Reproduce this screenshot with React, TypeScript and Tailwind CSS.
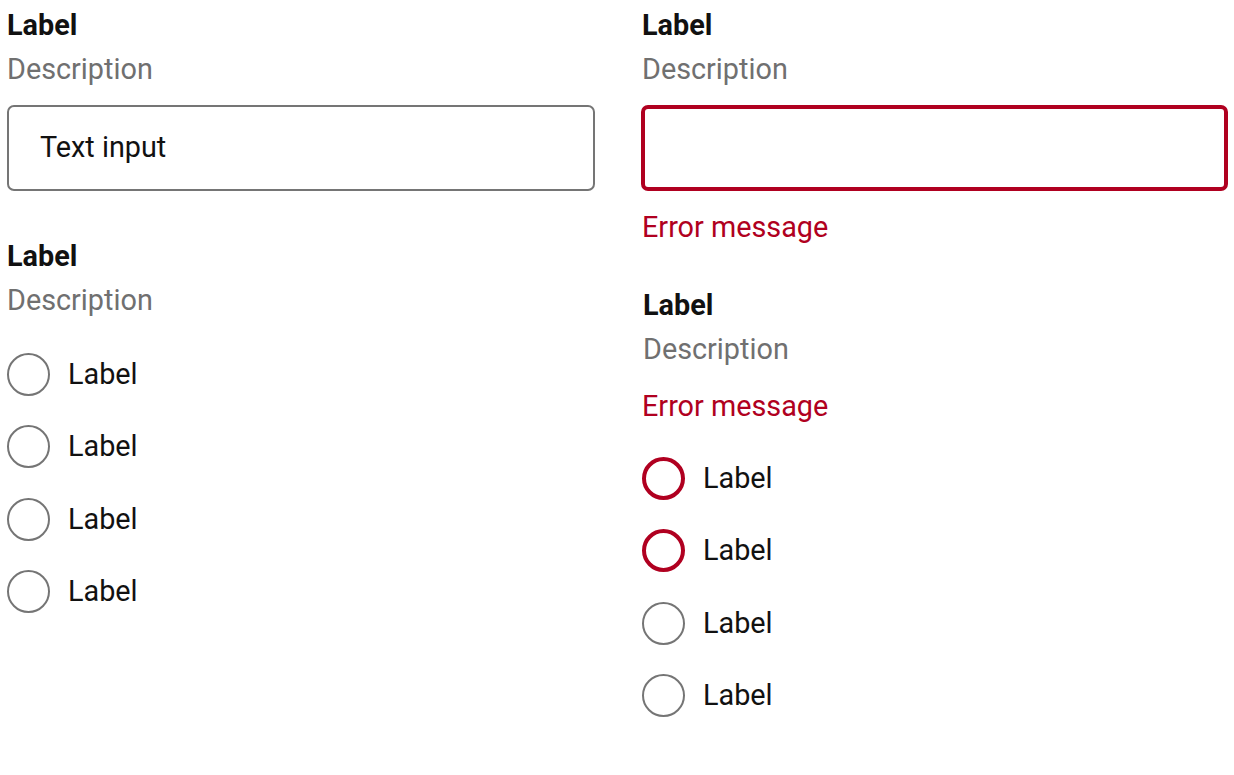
const font = { fontFamily: "Roboto, 'Noto Sans', sans-serif" };

function Header({ label, description }: { label: string; description: string }) {
	return (
		<div>
			<div className="text-[28.8px] leading-[44px] font-bold text-[#111]">{label}</div>
			<div className="text-[28.8px] leading-[44px] text-[#707070]">{description}</div>
		</div>
	);
}

function Radio({ error }: { error?: boolean }) {
	return (
		<div className="flex items-center h-[72.5px] gap-[18px]">
			<div
				className={
					error
						? "w-[43px] h-[43px] rounded-full border-[4px] border-[#b00020] shrink-0"
						: "w-[43px] h-[43px] rounded-full border-[2px] border-[#757575] shrink-0"
				}
			/>
			<span className="text-[28.8px] text-[#111]">Label</span>
		</div>
	);
}

export default function App() {
	return (
		<div className="w-[1234px] h-[775px] bg-white flex gap-[46px] pl-[7px] pt-[3px]" style={font}>
			{/* left column */}
			<div className="w-[588px] flex flex-col">
				<Header label="Label" description="Description" />
				<div className="mt-[14px] h-[86px] rounded-[7px] border-[2px] border-[#757575] flex items-center pl-[31px] text-[28.8px] text-[#111]">
					Text input
				</div>
				<div className="mt-[43px]">
					<Header label="Label" description="Description" />
				</div>
				<div className="mt-[16px]">
					<Radio />
					<Radio />
					<Radio />
					<Radio />
				</div>
			</div>

			{/* right column */}
			<div className="w-[587px] flex flex-col">
				<div className="pl-[1px]">
					<Header label="Label" description="Description" />
				</div>
				<div className="mt-[14px] h-[86px] rounded-[7px] border-[4px] border-[#b00020]" />
				<div className="mt-[14px] pl-[1px] text-[28.8px] leading-[44px] text-[#b00020]">Error message</div>
				<div className="mt-[34px] pl-[2px]">
					<Header label="Label" description="Description" />
				</div>
				<div className="mt-[13px] pl-[1px] text-[28.8px] leading-[44px] text-[#b00020]">Error message</div>
				<div className="mt-[14px] pl-[1px]">
					<Radio error />
					<Radio error />
					<Radio />
					<Radio />
				</div>
			</div>
		</div>
	);
}
